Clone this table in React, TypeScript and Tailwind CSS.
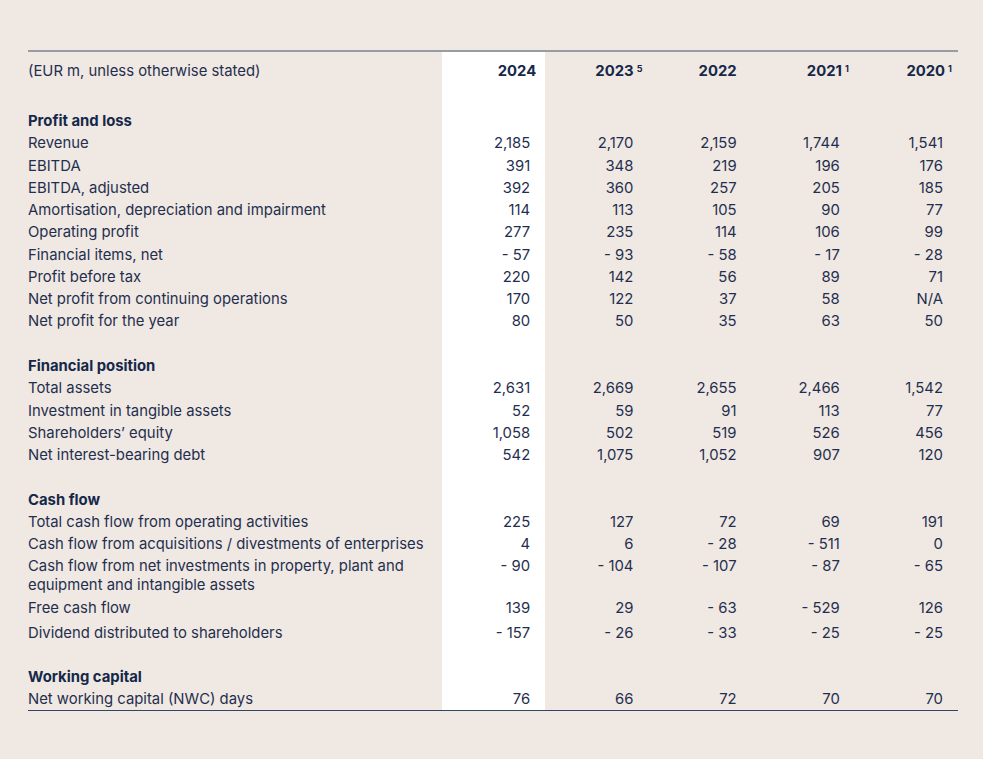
type Row =
  | { kind: 'section'; label: string }
  | { kind: 'row'; label: string; values: string[]; h?: string; twoLine?: boolean }
  | { kind: 'gap'; h: string };

const ROWS: Row[] = [
  { kind: 'gap', h: 'h-[20px]' },
  { kind: 'section', label: 'Profit and loss' },
  { kind: 'row', label: 'Revenue', values: ['2,185', '2,170', '2,159', '1,744', '1,541'] },
  { kind: 'row', label: 'EBITDA', values: ['391', '348', '219', '196', '176'] },
  { kind: 'row', label: 'EBITDA, adjusted', values: ['392', '360', '257', '205', '185'] },
  { kind: 'row', label: 'Amortisation, depreciation and impairment', values: ['114', '113', '105', '90', '77'] },
  { kind: 'row', label: 'Operating profit', values: ['277', '235', '114', '106', '99'] },
  { kind: 'row', label: 'Financial items, net', values: ['- 57', '- 93', '- 58', '- 17', '- 28'] },
  { kind: 'row', label: 'Profit before tax', values: ['220', '142', '56', '89', '71'] },
  { kind: 'row', label: 'Net profit from continuing operations', values: ['170', '122', '37', '58', 'N/A'] },
  { kind: 'row', label: 'Net profit for the year', values: ['80', '50', '35', '63', '50'] },
  { kind: 'gap', h: 'h-[22.5px]' },
  { kind: 'section', label: 'Financial position' },
  { kind: 'row', label: 'Total assets', values: ['2,631', '2,669', '2,655', '2,466', '1,542'] },
  { kind: 'row', label: 'Investment in tangible assets', values: ['52', '59', '91', '113', '77'] },
  { kind: 'row', label: 'Shareholders’ equity', values: ['1,058', '502', '519', '526', '456'] },
  { kind: 'row', label: 'Net interest-bearing debt', values: ['542', '1,075', '1,052', '907', '120'] },
  { kind: 'gap', h: 'h-[22.5px]' },
  { kind: 'section', label: 'Cash flow' },
  { kind: 'row', label: 'Total cash flow from operating activities', values: ['225', '127', '72', '69', '191'] },
  { kind: 'row', label: 'Cash flow from acquisitions / divestments of enterprises', values: ['4', '6', '- 28', '- 511', '0'] },
  {
    kind: 'row',
    label: 'Cash flow from net investments in property, plant and equipment and intangible assets',
    values: ['- 90', '- 104', '- 107', '- 87', '- 65'],
    twoLine: true,
  },
  { kind: 'row', label: 'Free cash flow', values: ['139', '29', '- 63', '- 529', '126'] },
  { kind: 'row', label: 'Dividend distributed to shareholders', values: ['- 157', '- 26', '- 33', '- 25', '- 25'], h: 'h-[28px]' },
  { kind: 'gap', h: 'h-[19px]' },
  { kind: 'section', label: 'Working capital' },
  { kind: 'row', label: 'Net working capital (NWC) days', values: ['76', '66', '72', '70', '70'] },
];

const YEARS: { year: string; note?: string }[] = [
  { year: '2024' },
  { year: '2023', note: '5' },
  { year: '2022' },
  { year: '2021', note: '1' },
  { year: '2020', note: '1' },
];

const GRID = 'grid grid-cols-[414px_repeat(5,minmax(0,1fr))]';

function FirstCol({ children, className = '' }: { children?: React.ReactNode; className?: string }) {
  return <div className={`bg-white ${className}`}>{children}</div>;
}

export default function App() {
  return (
    <div
      className="min-h-[759px] w-full bg-[#f0e8e2] pt-[50px] pl-[28px] pr-[25px] pb-[48px] text-[#1f2f4f]"
      style={{ fontFamily: 'Inter, "Liberation Sans", sans-serif' }}
    >
      <div className="border-t-2 border-b-[1.5px] border-t-[#989da5] border-b-[#2f4668] text-[14.85px]">
        {/* Header */}
        <div className={`${GRID} h-[38px]`}>
          <div className="flex items-center">(EUR m, unless otherwise stated)</div>
          {YEARS.map((y, i) => (
            <div
              key={y.year}
              className={`flex items-center justify-end font-bold text-[#15284a] ${
                i === 0 ? 'bg-white pr-[9px]' : 'pr-[15px]'
              }`}
            >
              <span>{y.year}</span>
              {y.note && (
                <span className="ml-[3px] -mr-[9px] self-start mt-[12px] text-[9px] leading-none">{y.note}</span>
              )}
            </div>
          ))}
        </div>

        {ROWS.map((r, idx) => {
          if (r.kind === 'gap') {
            return (
              <div key={idx} className={`${GRID} ${r.h}`}>
                <div />
                <FirstCol />
              </div>
            );
          }
          if (r.kind === 'section') {
            return (
              <div key={idx} className={`${GRID} h-[22.25px]`}>
                <div className="flex items-center font-bold text-[#15284a]">{r.label}</div>
                <FirstCol />
              </div>
            );
          }
          const rowH = r.twoLine ? 'h-[41px]' : r.h ?? 'h-[22.25px]';
          return (
            <div key={idx} className={`${GRID} ${rowH}`}>
              <div
                className={
                  r.twoLine ? 'pt-[1.5px] leading-[19px] pr-[30px]' : 'flex items-center whitespace-nowrap'
                }
              >
                {r.label}
              </div>
              {r.values.map((v, i) => (
                <div
                  key={i}
                  className={`flex justify-end pr-[15px] ${r.twoLine ? 'pt-[1.5px] leading-[19px]' : 'items-center'} ${
                    i === 0 ? 'bg-white' : ''
                  }`}
                >
                  {v}
                </div>
              ))}
            </div>
          );
        })}
      </div>
    </div>
  );
}
